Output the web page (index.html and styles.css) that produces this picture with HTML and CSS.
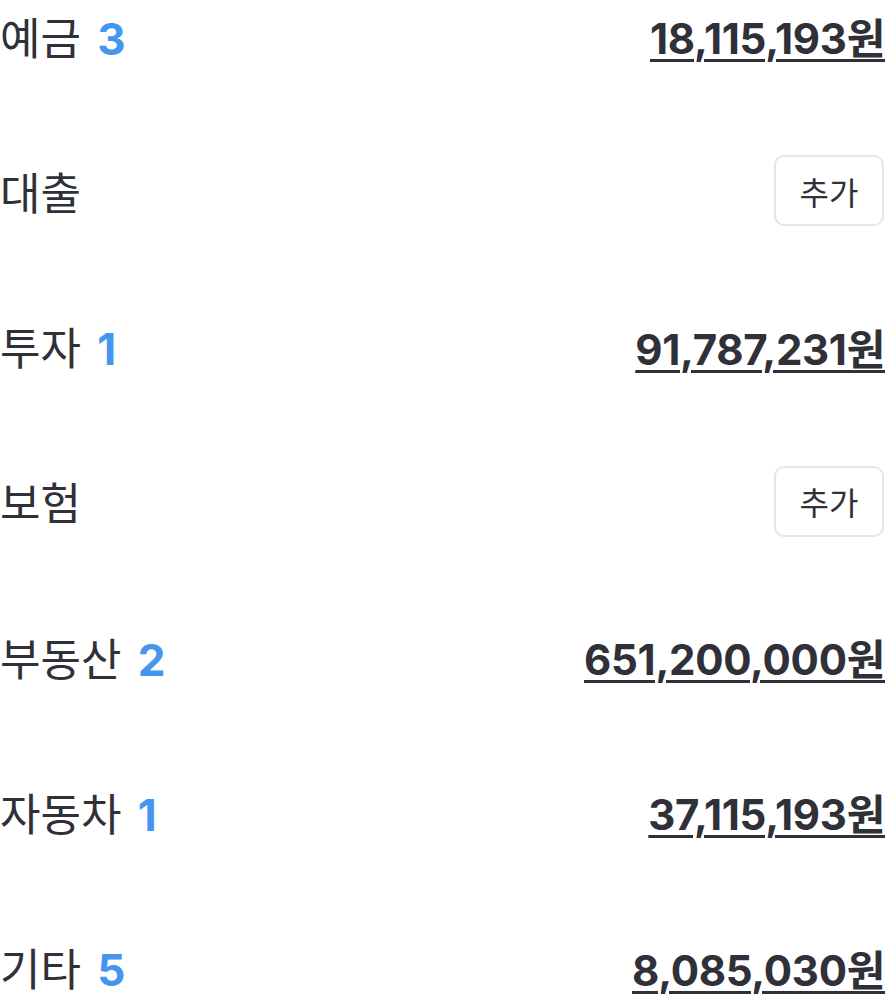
FILE: index.html
```html
<!DOCTYPE html>
<html lang="ko">
<head>
    <meta charset="utf-8">
    <title>자산</title>
    <meta name="viewport" content="width=device-width, initial-scale=1.0">
    <link rel="stylesheet" href="styles.css">
</head>
<body>

<ul class="asset-list">
    <li class="asset-row">
        <span class="asset-name">예금 <b class="asset-count">3</b></span>
        <a class="asset-amount" href="#">18,115,193원</a>
    </li>
    <li class="asset-row">
        <span class="asset-name">대출</span>
        <button class="add-button" type="button">추가</button>
    </li>
    <li class="asset-row">
        <span class="asset-name">투자 <b class="asset-count">1</b></span>
        <a class="asset-amount" href="#">91,787,231원</a>
    </li>
    <li class="asset-row">
        <span class="asset-name">보험</span>
        <button class="add-button" type="button">추가</button>
    </li>
    <li class="asset-row">
        <span class="asset-name">부동산 <b class="asset-count">2</b></span>
        <a class="asset-amount" href="#">651,200,000원</a>
    </li>
    <li class="asset-row">
        <span class="asset-name">자동차 <b class="asset-count">1</b></span>
        <a class="asset-amount" href="#">37,115,193원</a>
    </li>
    <li class="asset-row">
        <span class="asset-name">기타 <b class="asset-count">5</b></span>
        <a class="asset-amount" href="#">8,085,030원</a>
    </li>
</ul>

</body>
</html>
```

FILE: styles.css
```css
body {
    margin: 0;
    background-color: #ffffff;
    font-family: Inter, "Noto Sans CJK KR", sans-serif;
    color: #2f3038;
}
.asset-list {
    list-style: none;
    margin: 0;
    padding: 0;
    display: flex;
    flex-direction: column;
    gap: 84.3px;
}
.asset-row {
    height: 71px;
    display: flex;
    align-items: center;
    justify-content: space-between;
}
.asset-name {
    font-size: 44px;
    font-weight: 400;
    word-spacing: 4px;
}
.asset-count {
    color: #4496ef;
    font-weight: 700;
}
.asset-amount {
    font-size: 42px;
    font-weight: 700;
    color: #2f3038;
    text-decoration: underline;
    text-decoration-thickness: 3px;
    text-underline-offset: 5px;
    letter-spacing: -0.3px;
}
.add-button {
    width: 110px;
    height: 71px;
    margin-right: 1px;
    background: #ffffff;
    border: 2px solid #e4e5ec;
    border-radius: 10px;
    font-family: inherit;
    font-size: 32px;
    color: #2f3038;
    padding: 0;
}
```
